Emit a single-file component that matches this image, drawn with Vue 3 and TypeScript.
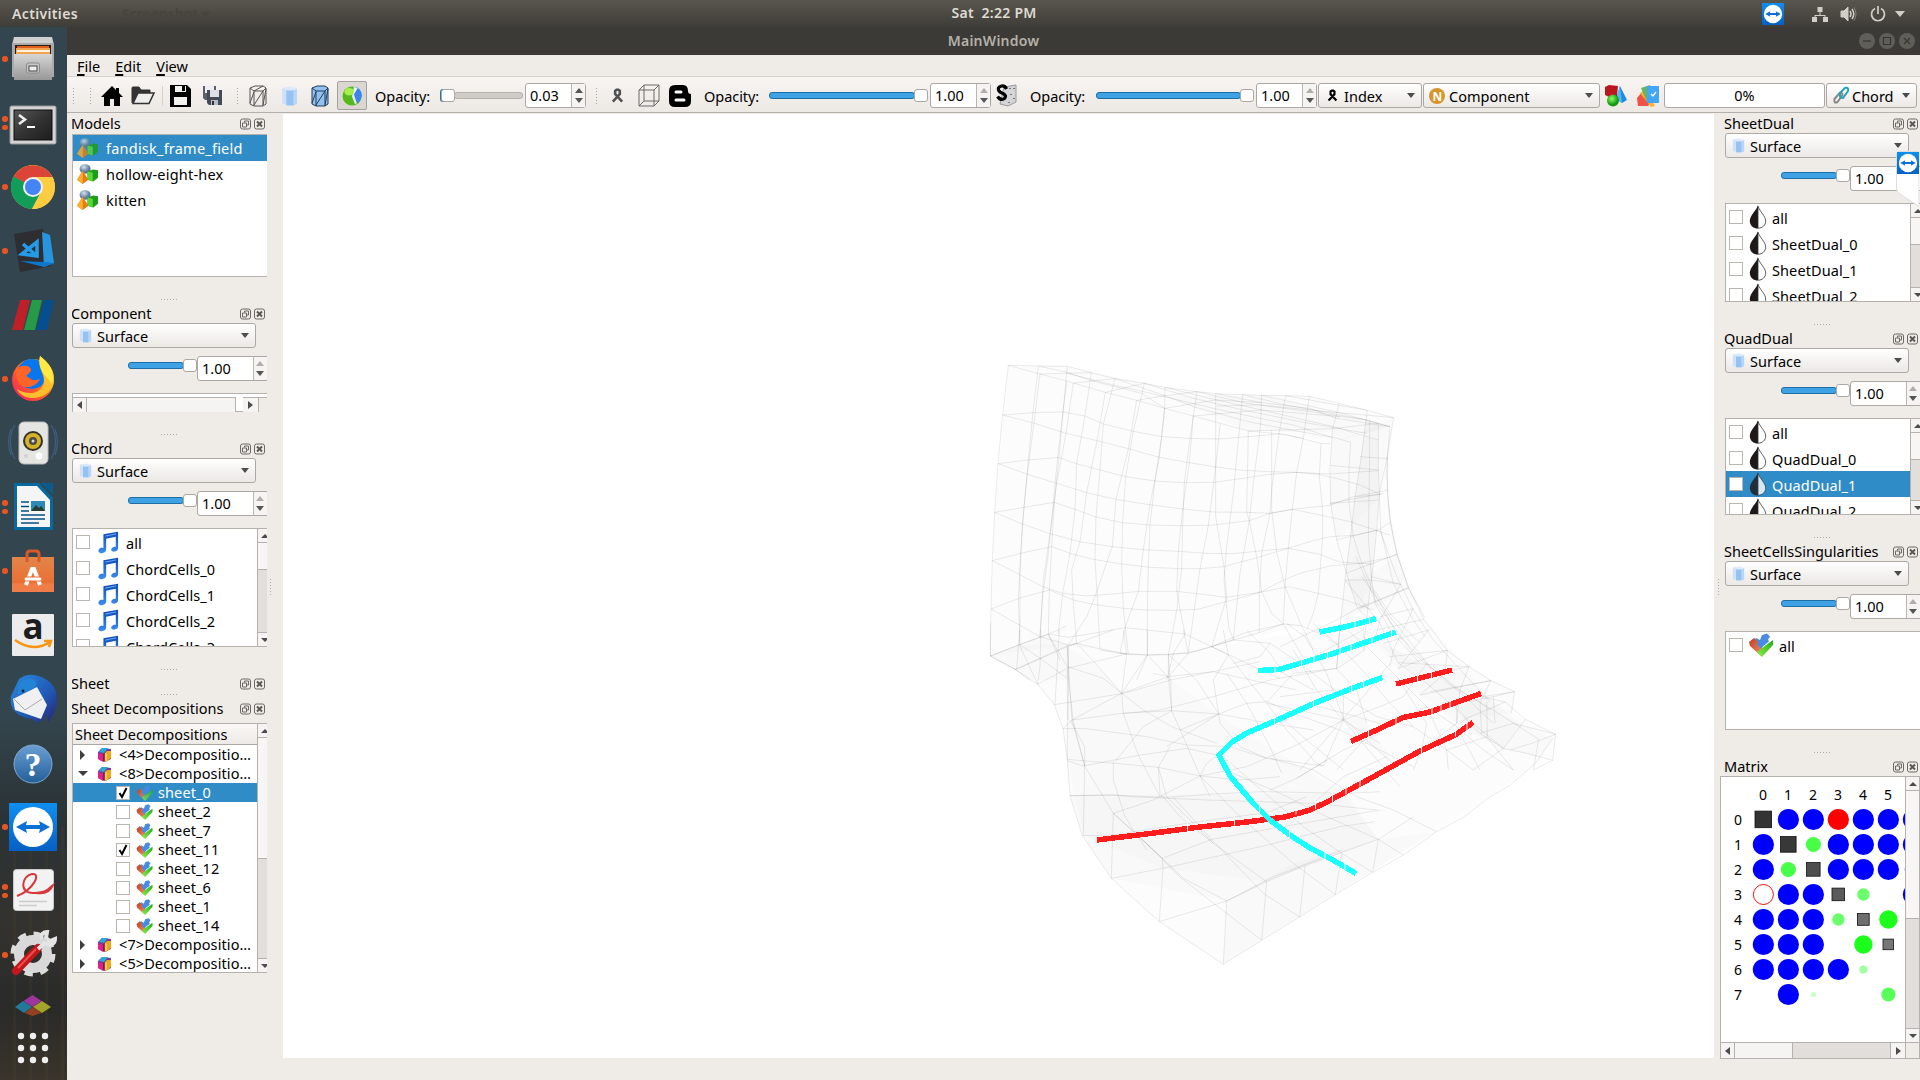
<script setup lang="ts">
interface Dock {
  title: string
  height: number
  listHeight: number
  icon?: string
  items?: string[]
  selected?: number
  scroll?: boolean
}

const leftDocks: Dock[] = [
  { title: 'Component', height: 135, listHeight: 0 },
  { title: 'Chord', height: 235, listHeight: 119, icon: 'note', items: ['all', 'ChordCells_0', 'ChordCells_1', 'ChordCells_2', 'ChordCells_3'], scroll: true },
]
const rightDocks: Dock[] = [
  { title: 'SheetDual', height: 209, listHeight: 99, icon: 'drop', items: ['all', 'SheetDual_0', 'SheetDual_1', 'SheetDual_2'], scroll: true },
  { title: 'QuadDual', height: 213, listHeight: 97, icon: 'drop', items: ['all', 'QuadDual_0', 'QuadDual_1', 'QuadDual_2'], selected: 2, scroll: true },
  { title: 'SheetCellsSingularities', height: 215, listHeight: 99, icon: 'sheet', items: ['all'] },
]
const models: string[] = ['fandisk_frame_field', 'hollow-eight-hex', 'kitten']

interface TreeRow { label: string; kind: 'closed' | 'open' | 'leaf'; checked?: boolean; selected?: boolean }
const tree: TreeRow[] = [
  { label: '<4>Decompositio…', kind: 'closed' },
  { label: '<8>Decompositio…', kind: 'open' },
  { label: 'sheet_0', kind: 'leaf', checked: true, selected: true },
  { label: 'sheet_2', kind: 'leaf' },
  { label: 'sheet_7', kind: 'leaf' },
  { label: 'sheet_11', kind: 'leaf', checked: true },
  { label: 'sheet_12', kind: 'leaf' },
  { label: 'sheet_6', kind: 'leaf' },
  { label: 'sheet_1', kind: 'leaf' },
  { label: 'sheet_14', kind: 'leaf' },
  { label: '<7>Decompositio…', kind: 'closed' },
  { label: '<5>Decompositio…', kind: 'closed' },
]

const launchers: { id: string; dots: number; glyph?: string }[] = [
  { id: 'files', dots: 1 }, { id: 'terminal', dots: 2 }, { id: 'chrome', dots: 1 }, { id: 'vscode', dots: 1 },
  { id: 'paraview', dots: 0 }, { id: 'firefox', dots: 1 }, { id: 'speaker', dots: 0 }, { id: 'writer', dots: 2 },
  { id: 'software', dots: 1 }, { id: 'amazon', dots: 0, glyph: 'a' }, { id: 'thunderbird', dots: 0 }, { id: 'help', dots: 0, glyph: '?' },
  { id: 'teamviewer', dots: 1 }, { id: 'pdf', dots: 2 }, { id: 'tweaks', dots: 1 },
]

interface Mark { x: number; y: number; shape: 'dot' | 'ring' | 'box'; size: number; color: string }
const blueCells = ['.BB.BBB', 'B..BBBB', 'B..BBB.', '.BB...B', 'BBB....', 'BBB....', 'BBBB...', '.B.....']
const marks: Mark[] = []
blueCells.forEach((row, y) => [...row].forEach((c, x) => {
  if (c === 'B') marks.push({ x, y, shape: 'dot', size: 10.6, color: '#0000ff' })
}))
marks.push(
  { x: 6, y: 2, shape: 'dot', size: 8.6, color: '#0000ff' },
  { x: 3, y: 0, shape: 'dot', size: 10.6, color: '#ff0000' },
  { x: 0, y: 3, shape: 'ring', size: 10, color: '#f01010' },
  { x: 2, y: 1, shape: 'dot', size: 7.6, color: '#48ff48' },
  { x: 1, y: 2, shape: 'dot', size: 7.6, color: '#48ff48' },
  { x: 4, y: 3, shape: 'dot', size: 6.2, color: '#6cff6c' },
  { x: 3, y: 4, shape: 'dot', size: 6.2, color: '#6cff6c' },
  { x: 5, y: 4, shape: 'dot', size: 9.2, color: '#1cff1c' },
  { x: 4, y: 5, shape: 'dot', size: 9.2, color: '#1cff1c' },
  { x: 4, y: 6, shape: 'dot', size: 4.1, color: '#a0ffa0' },
  { x: 2, y: 7, shape: 'dot', size: 2.6, color: '#c8ffc8' },
  { x: 5, y: 7, shape: 'dot', size: 7.1, color: '#58ff58' },
  { x: 0, y: 0, shape: 'box', size: 8.3, color: '#333333' },
  { x: 1, y: 1, shape: 'box', size: 7.8, color: '#383838' },
  { x: 2, y: 2, shape: 'box', size: 6.8, color: '#4e4e4e' },
  { x: 3, y: 3, shape: 'box', size: 6.3, color: '#5a5a5a' },
  { x: 4, y: 4, shape: 'box', size: 5.9, color: '#6e6e6e' },
  { x: 5, y: 5, shape: 'box', size: 5.3, color: '#777777' },
)

// Hexahedral mesh edges, grouped by patch; every patch is stored at 3x scale.
const wallEdges: string[] = [
  '145 46 235 48 322 49 394 68 465 86 553 100 615 112 711 125 767 131 848 134 905 136 977 137 1048 139 1138 160 1222 181 1301 203 1290 265 1282 318 1280 370 1283 421 1285 470 1291 517 1300 565 1311 613 1345 713 1395 803',
  '145 46 128 195 114 341 104 487 97 632 93 777 91 918 166 958 209 990',
  '145 46 240 72 340 99 436 127 530 151 614 175 700 198 781 220 865 243 975 253 1083 280 1110 281',
  '128 195 220 219 318 250 411 272 505 296 598 322 688 338 767 351 840 360 925 365 1010 367 1075 373 1140 388 1200 405 1255 430',
  '114 341 200 372 290 400 380 428 468 448 560 463 668 477 760 486 860 487 930 490 997 478 1085 496 1170 515 1290 555',
  '104 487 187 522 270 551 360 575 457 590 550 599 655 604 740 610 820 611 900 603 985 595 1075 612 1140 636 1235 642',
  '97 632 180 674 248 710 308 730 380 738 480 730 535 724 650 724 720 732 800 742 900 727 985 710 1075 730 1150 748 1240 780',
  '93 777 180 826 240 860 325 885 350 880 420 897 505 913 562 915 625 914 700 905 755 890 820 870 900 847 970 822 1025 827 1100 860 1150 900',
  '128 195 220 188 309 186 375 198 430 222 520 244 605 260 690 265 775 267 865 260 957 252 1030 265',
  '114 341 205 330 297 322 345 340 420 360 497 380 585 393 673 398 760 397 850 385 920 374 1010 367 1110 372 1255 362',
  '104 487 192 472 283 457 350 480 405 500 485 518 570 525 660 527 750 526 868 512 930 490 997 478 1110 466 1180 440 1283 421',
  '97 632 190 608 275 590 330 610 400 628 485 642 570 652 660 656 720 656 792 650 880 626 950 605 1060 572 1110 560 1180 556 1255 540 1291 517',
  '93 777 180 744 268 720 340 750 400 763 490 775 560 780 650 781 712 778 800 755 905 725 950 700 1020 670 1110 648 1200 640 1290 622 1311 613',
  '91 918 180 884 265 852 325 862 400 850 495 833 560 840 675 852 755 890 830 925 900 960 960 985',
  '166 958 240 925 325 885', '755 890 850 850 970 822', '180 884 240 925 322 985',
  '240 72 222 218 202 372 187 522 180 674 180 826 170 958',
  '235 50 218 195 205 330 192 472 182 610 175 745 180 884',
  '320 96 309 186 292 330 278 480 265 610 248 740 240 860',
  '322 49 309 186 297 322 283 457 275 590 268 720 265 852 300 930',
  '340 99 318 250 290 400 270 551 250 690 240 860',
  '394 68 375 198 350 340 345 480 330 610 308 730 295 850',
  '436 127 411 272 380 428 360 575 335 660 340 760 350 880',
  '465 86 430 222 420 360 408 500 405 628 413 760 420 897',
  '530 151 505 296 468 448 457 590 405 740 380 800 325 885',
  '553 100 520 244 497 380 488 518 485 642 490 775 505 913',
  '614 175 598 322 570 463 550 599 535 724 495 833 480 910',
  '615 112 614 175 605 260 585 393 570 525 565 650 562 780 562 915 530 990',
  '700 198 688 338 668 477 655 604 650 724 675 852 640 910 620 990',
  '711 125 700 198 690 265 673 398 668 527 665 656 650 781 625 914 630 990',
  '781 220 767 351 745 526 720 656 700 800 685 905',
  '767 131 767 351 767 500 792 650 800 742 755 890',
  '848 134 838 240 820 430 800 590 792 690 806 830 820 870',
  '865 243 860 487 868 512 890 620 905 725 935 790 970 822',
  '900 240 880 400 868 512 840 670 820 870',
  '905 136 902 220 900 240', '935 241 935 480 950 605 975 710 1025 827 1060 900',
  '977 137 957 252 935 420 930 490 905 610 898 725 898 847',
  '1048 139 1030 265 1010 367 997 478 985 595 975 710 970 822 1040 940',
  '1083 280 1078 380 1088 480 1088 560 1075 730 1060 790 1040 840',
  '1138 160 1118 235 1110 360 1112 460 1130 570 1160 670 1190 770 1240 830',
  '1172 277 1167 350 1167 460 1180 560 1205 640 1235 710 1290 790 1380 880',
  '1222 181 1218 210 1204 320 1185 440 1172 560 1157 670 1148 760 1140 830 1130 955',
  '1255 220 1255 270 1255 360 1258 430 1250 540 1240 640 1225 760 1210 900',
  '1229 210 1229 320 1227 450 1225 560 1235 690 1245 760 1290 840 1380 940',
  '1290 230 1282 318 1258 430 1262 540 1300 700 1360 810 1395 860',
  '240 72 394 68', '340 99 465 86', '436 127 553 100', '530 151 615 137 711 125', '614 175 767 150 905 158', '700 198 905 180 1140 200',
  '322 70 460 105 530 120 612 140 760 175 900 205 1000 225 1115 262',
  '235 48 325 68 394 92 545 130 614 175', '465 86 615 137 700 170 865 215 1020 245 1120 262 1172 277',
  '553 100 700 145 850 180 1020 215 1220 250', '615 112 770 150 905 180 1120 230 1255 270', '711 125 860 160 1048 185 1218 210 1290 230',
  '767 131 905 158 1048 175 1130 205 1290 230', '848 134 977 165 1222 210', '905 136 1138 188 1290 230', '977 137 1222 181', '770 168 900 165 1050 180 1301 203',
  '865 243 935 241 1118 236 1255 220', '1110 346 1255 360', '1110 460 1255 450', '1112 460 1270 430', '1130 570 1255 540', '1157 670 1311 613',
  '1155 690 1235 690 1322 703', '1195 775 1345 713', '1200 320 1282 326', '1190 440 1265 433',
]
const stepEdges: string[] = [
  '322 200 322 300 332 396 351 492 386 594 432 688 502 781 567 830 632 872 704 905 694 970',
  '704 905 640 920 560 935', '610 922 676 936 736 988 827 1033 818 1111 760 1140', '736 988 670 1075', '827 1033 755 1060 690 1080', '776 1048 760 1140',
  '827 1033 700 1000 600 1030', '818 1111 740 1090 670 1075', '676 936 560 985 540 1000',
  '195 570 300 700 354 818 440 880 560 985 670 1075', '228 500 290 640 400 790 502 880 640 960 776 1048',
  '245 560 330 680 450 830 540 900 632 960', '272 590 350 730 440 820 560 925 640 1000',
  '300 420 350 560 400 660 460 750 560 860 630 935', '275 560 362 583', '240 655 386 594', '300 680 400 656', '290 720 432 688', '310 760 446 720',
  '330 800 502 781', '354 818 567 830', '354 836 502 781', '380 870 567 830', '420 915 632 872', '450 905 632 872', '480 940 704 905',
  '502 781 495 850 420 915', '446 720 354 836', '400 656 340 780 330 830', '362 583 300 690 287 740', '567 830 540 900 530 1000', '632 872 600 940 605 1030',
  '530 935 530 1000', '550 980 600 1030 670 1075', '620 935 622 1040', '640 920 645 1000',
  '180 700 260 770 350 860 440 950 530 1010 610 1080 700 1140', '100 700 170 760 256 850 330 940 400 1010 500 1080 580 1140',
  '20 700 75 740 140 850 190 985 270 1060 350 1130', '0 770 75 735 170 690 260 640', '0 850 100 800 250 720',
  '0 920 160 900 290 980 400 1010', '0 1000 100 945 230 980 330 1010', '60 1140 190 985 250 920 330 820', '170 1140 260 1040 360 990 440 950',
  '250 710 255 780 170 837', '180 700 175 760 170 837', '170 837 230 900 260 1000', '350 860 440 1000 425 1080 400 1140', '440 950 500 1080 505 1140',
  '530 1010 600 1140', '620 1040 700 1140', '440 1070 530 1000', '500 1080 620 1040', '580 1140 670 1075', '0 980 80 1050 190 1140',
]
const floorEdges: string[] = [
  '31 -20 31 78 106 119 173 163 223 224 249 296 262 388 270 497 307 617 394 745 538 875 730 1003 845 931 959 861 1066 794 1178 727 1270 675 1370 605 1448 563 1528 502 1588 467 1666 401 1718 325',
  '262 50 262 388', '266 50 264 270', '31 78 118 44 204 13 260 -12', '106 119 262 50 290 40 400 0', '173 163 262 115 440 72', '223 224 430 190 572 150 700 125 840 95',
  '249 296 276 270 428 250 575 242 716 252 870 280 1000 300', '249 296 310 295 500 320 620 345 750 350 860 385 1030 408',
  '262 388 405 400 535 412 660 438 780 450 900 440', '262 392 310 408 475 376 620 355 710 375',
  '270 497 400 495 560 502 700 492 850 485 1100 490 1200 485', '270 497 400 495 450 500 680 510 1000 520 1190 540',
  '307 617 400 615 620 580 860 548 980 500', '394 745 548 715 850 648 1080 590 1185 575', '538 875 740 813 860 755 970 708 1195 628 1300 560',
  '547 685 695 628 850 600 1200 540', '547 685 549 715 538 875', '740 813 730 1003', '860 755 845 931', '975 708 959 861', '1085 670 1066 794', '1195 628 1178 727',
  '740 813 610 745 547 685 400 550 314 408 280 275 262 120', '860 755 700 640 560 500 535 412 570 350', '740 813 880 740 1085 660',
  '845 931 740 850 605 745 478 620 400 550', '959 861 850 790 695 628 580 502', '1066 794 940 700 780 560 660 438 680 400 720 370',
  '1178 727 1085 670 970 590 850 485 730 380', '1270 675 1195 628 1040 560 900 490 760 430', '1370 605 1240 540 1130 500 1000 420 870 385',
  '478 620 547 685', '400 550 394 745', '314 408 310 617', '400 550 520 510 660 438 800 410 950 345 1090 270',
  '270 270 314 350 314 408', '238 0 225 224', '120 0 118 44 173 163', '183 0 180 110 173 163', '290 40 262 50 276 270 314 408',
  '290 40 360 115 425 190 490 240 575 290 710 340', '204 13 262 110 370 145 425 190', '362 60 420 70 440 72 425 190 430 250 475 376 540 500',
  '502 75 425 190 276 270', '502 75 572 150 575 242 620 345 660 438 690 500', '565 75 565 140 575 242 490 290 405 395', '625 70 565 140 425 190',
  '565 75 650 150 716 252 720 280 780 350 860 385', '695 50 745 75 860 220 1090 270 1200 340', '695 50 625 70 502 75 420 70', '745 75 700 150 716 252 640 300 560 350',
  '760 30 695 50', '760 30 870 40 960 100 1090 200', '800 220 862 215 940 130 1070 115', '740 130 800 220 870 350 905 430', '800 220 716 252 600 300',
  '860 220 920 300 1010 400 1030 408', '1090 200 1090 270 1030 408', '862 215 940 250 1080 300 1300 410', '940 60 1010 180 1090 270 1140 330 1260 470',
  '1090 270 1200 230 1270 200 1340 100', '950 445 1090 360 1200 310', '870 480 950 445 1040 390', '1000 520 1090 440 1220 380',
  '800 0 870 70 910 130 1000 180', '870 40 840 80 760 100', '520 130 565 140 700 125 860 160 950 180', '400 395 400 450 435 560 500 660',
  '535 412 540 490 600 560 700 640', '430 250 540 240 700 200 870 150 1070 115', '730 0 745 75', '610 0 625 70', '430 0 440 72', '502 0 502 75',
]
// Region fills are kept separately so overlapping patches accumulate.
const wallFills: string[] = [
  '145 46 322 49 615 112 767 131 1048 139 1301 203 1290 230 1110 281 935 241 865 243 700 198',
  '145 46 700 198 865 243 1110 281 1301 203 1283 421 1311 613 1345 713 1240 780 755 890 562 915 325 885 91 918 104 487',
  '1118 236 1255 270 1255 450 1130 570 1110 460', '1218 210 1290 230 1258 430 1240 690 1195 775 1157 670 1185 440',
  '1218 210 1255 215 1258 430 1240 640 1225 770 1140 830 1157 670 1185 440',
  '91 918 265 852 325 885 325 990 209 990', '615 137 905 136 1290 230 1222 250 865 243',
]
const floorFills: string[] = [
  '31 78 106 119 173 163 223 224 249 296 270 497 307 617 394 745 538 875 730 1003 1528 502 1666 401 1718 325 1490 220 1190 20 1000 0 695 50 502 75 290 40 118 44',
  '262 50 360 115 425 190 572 150 740 270 1090 490 1195 628 860 755 547 715 310 617 262 388',
  '270 497 1100 490 1195 628 860 755 740 813 394 745 307 617', '940 700 1195 628 1370 605 1066 794 730 1003 740 813',
]
const stepFills: string[] = [
  '195 570 290 540 351 492 432 688 567 830 704 905 694 970 560 985 440 880 280 750 240 655',
  '530 935 620 922 736 988 827 1033 818 1111 670 1075 550 1020', '280 750 440 820 567 850 640 935 720 1000 670 1078 530 1000 420 915',
  '180 700 250 710 255 780 170 837', '190 985 250 985 350 1130 270 1060',
]
const cyanTracks: string[] = ['1319.5 632 1340 628 1357 624 1376 618.5', '1258 670.5 1279 669.5 1300 663.5 1333 653.5 1365 642.5 1396 632',
  '1382.5 677.5 1353 688 1315 703 1275 721 1247 733 1232 742 1219 755 1230 776 1253 803 1270 820 1290 835 1310 848 1332 859.5 1356 873.5']
const redTracks: string[] = ['1396 684 1416 679 1432 675 1452 670', '1351 741.5 1379 729 1403 717.5 1430 712 1449 705 1481 693.5',
  '1097 840 1150 833.5 1200 827 1247 822 1285 817 1310 810 1327 802 1362 783 1420 751 1455 735 1473 722.5']
const gaps: [number, number][] = [
  [1355, 624], [1369.5, 620], [1275, 669.5], [1301.5, 663], [1314, 659.5], [1327.5, 655.5], [1340, 651], [1351, 648], [1372, 640.5], [1391.5, 634],
  [1363.5, 685], [1351.5, 689], [1313.5, 704.5], [1274.5, 721], [1259.5, 810.5], [1289.5, 834], [1325, 857], [1345, 868],
  [1417.5, 678.5], [1431.5, 674.5], [1368.5, 734], [1396, 720], [1432, 711], [1441, 708], [1450, 705],
  [1187.5, 826.5], [1234.5, 820.5], [1296, 809.5], [1315.5, 804], [1332.5, 797], [1346, 789.5], [1360, 781.5], [1421.5, 748], [1455.5, 731.5], [1467, 726],
]
</script>

<template>
  <div class="desktop">
    <svg class="defs" width="0" height="0" aria-hidden="true">
      <defs>
        <linearGradient id="gMetal" x2="0" y2="1"><stop offset="0" stop-color="#d6d6d6" /><stop offset="1" stop-color="#979797" /></linearGradient>
        <linearGradient id="gTerm" x2="1" y2="1"><stop offset="0" stop-color="#565656" /><stop offset=".5" stop-color="#333" /><stop offset="1" stop-color="#1d1d1d" /></linearGradient>
        <linearGradient id="gTv" x2="0" y2="1"><stop offset="0" stop-color="#0f8ff0" /><stop offset="1" stop-color="#0660c4" /></linearGradient>
        <linearGradient id="gFox" x2="1" y2="0" y1="1"><stop offset="0" stop-color="#f5156c" /><stop offset=".5" stop-color="#ff6a1f" /><stop offset="1" stop-color="#ffe43a" /></linearGradient>
        <linearGradient id="gNote" x2="0" y2="1"><stop offset="0" stop-color="#0b49b8" /><stop offset="1" stop-color="#3c8ff0" /></linearGradient>
        <linearGradient id="gHelp" x2="0" y2="1"><stop offset="0" stop-color="#6b9fd6" /><stop offset="1" stop-color="#235f97" /></linearGradient>
        <linearGradient id="gBird" x2="1" y2="1"><stop offset="0" stop-color="#2b8ae0" /><stop offset=".6" stop-color="#1f58b5" /><stop offset="1" stop-color="#2a2171" /></linearGradient>
        <linearGradient id="gSoft" x2="0" y2="1"><stop offset="0" stop-color="#e2854a" /><stop offset=".75" stop-color="#ea6f33" /><stop offset=".76" stop-color="#f07c48" /></linearGradient>
        <linearGradient id="gRed" x2="1" y2="1"><stop offset="0" stop-color="#c23a1c" /><stop offset="1" stop-color="#f09a6a" /></linearGradient>
        <linearGradient id="gGreen" x2="1" y1="1"><stop offset="0" stop-color="#8df04c" /><stop offset="1" stop-color="#1fae12" /></linearGradient>
        <radialGradient id="gBall" cx=".4" cy=".35"><stop offset="0" stop-color="#8cff60" /><stop offset="1" stop-color="#159a14" /></radialGradient>
        <radialGradient id="gGrey" cx=".4" cy=".3"><stop offset="0" stop-color="#d5e2ee" /><stop offset="1" stop-color="#5b7b99" /></radialGradient>
      </defs>
      <symbol id="cyl" viewBox="0 0 16 18"><path d="M1 2 8 1v16l-7-1z" fill="#cfe1f8" /><path d="M5 3.500h7v14H5z" fill="#94c2f2" /><path d="M12 4 15 2v14l-3 1.500z" fill="#b7d5f8" /><path d="M1 2 8 .5 15 2l-4 2H6z" fill="#dce9fa" /></symbol>
      <symbol id="shapes" viewBox="0 0 22 24"><circle cx="8.500" cy="6" r="5.800" fill="url(#gGrey)" /><path d="M6 8 12 19 6 24 0 19z" fill="#f07a12" /><path d="M6 8v16l-6-5z" fill="#f9b02e" /><path d="m11 9 6-2.500 5 1v9L17 21l-6-2z" fill="#1f9c1a" /><path d="m11 9 5.500 1.500V21L11 19z" fill="#5bd838" /></symbol>
      <symbol id="drop" viewBox="0 0 18 24"><path d="M9 .3C7.800 5 .8 10.500 .8 16c0 4.500 3.800 7.600 8.200 7.600z" fill="#1e1819" /><path d="M9 1.200c1.500 5 7.700 10 7.700 14.800 0 4.300-3.400 7.200-7.700 7.200z" fill="#fff" stroke="#333" stroke-width=".8" /></symbol>
      <symbol id="note" viewBox="0 0 24 24"><path d="M7 3 23 .3v17.700c.3 2-2 4-4.500 4s-4-2-2.300-3.700 3.300-2 4.300-1.600V5.800L10 8V20c0 2-2.500 3.700-5 3.700S.5 21.500 2 19.500s3.500-2 5-1.500z" fill="url(#gNote)" /><path d="M9 5 21 2.600" stroke="#7bb4f8" stroke-width="1" /></symbol>
      <symbol id="sheet" viewBox="0 0 24 24"><path d="m0 9 5-4 7 5 2 8-2 5L1 13z" fill="url(#gRed)" /><path d="m12 16 5-4 7-5v5L13 24l-5-5z" fill="url(#gGreen)" /><path d="m7 5 4 2 2-5 5-1.500 3 3-2 3 1 2-5 4-3 3-4-4 1-3-3-2z" fill="#4a8ae0" /></symbol>
      <symbol id="box3" viewBox="0 0 14 15"><path d="M4 1 13 2v10l-6 3-7-3V5z" fill="#7c3a93" /><path d="m0 6 5 2v7l-5-3z" fill="#e0218a" /><path d="m5 8 1-2v8l-1 1z" fill="#8c1456" /><path d="m7 6 2-2 4 0v7l-5 4-1-1z" fill="#eda81d" /><path d="m7 6 2 1v8l-2-1z" fill="#f6cf31" /><path d="m4 1 6 0-4 5-5-1z" fill="#28a9d8" /></symbol>
      <symbol id="tv" viewBox="0 0 48 48"><path d="M0 0h48v48H0z" fill="url(#gTv)" /><circle cx="24" cy="24" r="20" fill="#fff" /><path d="m7 24 11-6-1 4h14l-1-4 11 6-11 6 1-4H17l1 4z" fill="#0b6fd4" /></symbol>
      <symbol id="float" viewBox="0 0 11 11"><rect x=".5" y=".5" width="10" height="10" rx="2" fill="none" stroke="#6c6a67" /><path d="M4.500 4V2.500h4v4H7M2.500 4.500h4v4h-4z" fill="none" stroke="#6c6a67" /></symbol>
      <symbol id="close" viewBox="0 0 11 11"><rect x=".5" y=".5" width="10" height="10" rx="2" fill="none" stroke="#6c6a67" /><path d="m3 3 5 5M8 3 3 8" stroke="#5a5856" stroke-width="2" /></symbol>
      <symbol id="ribbon" viewBox="0 0 14 16"><path d="M2 14.500 9.500 6.500V3L8 1.800H6L4.500 3v3.500L12 14.500" fill="none" stroke="currentColor" stroke-width="2.800" /></symbol>

      <symbol id="files" viewBox="0 0 64 64"><path d="M13 10h38l2 8H11z" fill="#d0d0d0" /><path d="M11 16h42v34H11z" fill="#aaa" /><path d="M14 18h36v10H14z" fill="#2b2018" /><path d="M16 19h32v9H16z" fill="#e0601c" /><path d="M15 21h34v7H15z" fill="#f3a24e" /><path d="M16 23h33v2H16z" fill="#fff2e0" /><path d="M13 27h38v26H13z" fill="url(#gMetal)" /><rect x="25.500" y="36" width="13" height="10" rx="2" fill="#c9c9c9" stroke="#888" /><rect x="28" y="39" width="8" height="5" fill="#eee" stroke="#444" /></symbol>
      <symbol id="terminal" viewBox="0 0 64 64"><rect x="9" y="15" width="46" height="38" rx="1.500" fill="#d4d4d4" stroke="#989898" /><rect x="13" y="19" width="38" height="30" fill="url(#gTerm)" stroke="#0e0e0e" /><path d="m18 24 6 4.500-6 4.500" fill="none" stroke="#eee" stroke-width="2.600" /><path d="M26 36h8" stroke="#fff" stroke-width="2" /></symbol>
      <symbol id="chrome" viewBox="0 0 64 64"><circle cx="32" cy="32" r="22" fill="#fbcb3c" /><path d="M32 32 12.500 22A22 22 0 0 1 51.500 22z" fill="#db4437" /><path d="M12.500 21.500A22 22 0 0 0 31 54l9-17-8-5z" fill="#119d58" /><path d="M32 22h19.500A22 22 0 0 1 31 54l9-17z" fill="#fdcc40" /><circle cx="32" cy="32" r="10" fill="#f1f1f1" /><circle cx="32" cy="32" r="8" fill="#4484f4" /></symbol>
      <symbol id="vscode" viewBox="0 0 64 64"><path d="m13 15 29-5 8 37-31 6z" fill="#2e2d31" /><path d="m41 13 8 3 4 28-10 4z" fill="#2795de" /><path d="M19 42 43 48l10-4-9-1z" fill="#0d77ca" /><path d="m22 25 14 12M21 35l15-12v14z" fill="none" stroke="#239be9" stroke-width="3.600" /></symbol>
      <symbol id="paraview" viewBox="0 0 64 64"><path d="M19 17h10l-7 30H11z" fill="#bd2029" /><path d="M31 17h10l-7 30H23z" fill="#259b47" /><path d="M43 17h10l-7 30H35z" fill="#054f8f" /></symbol>
      <symbol id="firefox" viewBox="0 0 64 64"><circle cx="32" cy="33" r="21" fill="url(#gFox)" /><circle cx="31" cy="27" r="15" fill="#0877ee" /><path d="M14 24c5-8 17-6 16 0l-5 5c4 2 7 6 14 3-4 9-18 11-22 3z" fill="#ff6428" /><path d="M39 9c9 7 15 14 14 26-4 19-31 21-37 7 12 8 27 4 27-9 0-7-7-13-4-24z" fill="#ffbe2b" /><path d="M39 9c9 7 16 16 12 28-4-7-15-12-12-28z" fill="#ffe943" /></symbol>
      <symbol id="speaker" viewBox="0 0 64 64"><path d="M14 14c-6 9-6 24 0 34M50 14c6 9 6 24 0 34M10 18c-3 8-3 18 0 26M54 18c3 8 3 18 0 26" fill="none" stroke="#3f5f80" stroke-width="1.200" /><rect x="18" y="11" width="29" height="42" rx="5" fill="#e5e5e2" stroke="#bbb" /><circle cx="32" cy="30" r="10" fill="#35322a" /><circle cx="32" cy="30" r="8" fill="#d5b227" /><circle cx="32" cy="30" r="4" fill="#4a4a48" /><circle cx="32" cy="30" r="1.500" fill="#ddd" /><circle cx="38" cy="45" r="3.500" fill="#fff" /><circle cx="25" cy="45" r="2" fill="#d2d2d2" /></symbol>
      <symbol id="writer" viewBox="0 0 64 64"><path d="M13 8h25l14 15v32H13z" fill="#0868a0" /><path d="M40 8h12v12z" fill="#0b5c8d" /><path d="M16 11h20l13 14v27H16z" fill="#f5f5f5" /><path d="M20 27h8M20 31.500h8M20 36h8M20 40h24M20 44h24M20 48h18" stroke="#055083" stroke-width="1.700" /><path d="M30 26h14v10H30z" fill="#2d89b5" /><path d="m30 36 5-6 3 3 2-2 4 5z" fill="#243f31" /></symbol>
      <symbol id="software" viewBox="0 0 64 64"><path d="M11 18h42v35H11z" fill="url(#gSoft)" /><path d="M26 23V15q0-3 3-3h6q3 0 3 3v8" fill="none" stroke="#d75929" stroke-width="3" /><path d="m25 46 6-16h2l6 16" fill="none" stroke="#fff" stroke-width="4" /><rect x="23" y="38" width="18" height="4" rx="2" fill="#fff" stroke="#ec702f" /></symbol>
      <symbol id="amazon" viewBox="0 0 64 64"><rect x="11" y="11" width="42" height="42" rx="1" fill="#ececec" /><path d="M14 37q18 13 35 2m-6-1h7l-2 6" fill="none" stroke="#f79411" stroke-width="2.500" /></symbol>
      <symbol id="thunderbird" viewBox="0 0 64 64"><path d="M18 12C28 3 46 9 53 20c6 12 2 26-6 35l-1-7-8 8-7-4C14 50 8 40 10 29z" fill="url(#gBird)" /><path d="M12 32 36 20l10 18-6 14-26-9z" fill="#f0f0f2" /><path d="m12 31 12 12 17-11" fill="none" stroke="#aaa" /><path d="M17 27c-1-10 5-18 15-15 6 2 4 8-2 11z" fill="#2384d6" /><circle cx="22" cy="24" r="1.400" fill="#171f35" /></symbol>
      <symbol id="help" viewBox="0 0 64 64"><circle cx="32" cy="33" r="19" fill="url(#gHelp)" stroke="#7ea9d0" /></symbol>
      <symbol id="teamviewer" viewBox="0 0 64 64"><use href="#tv" x="8" y="8" width="48" height="48" /></symbol>
      <symbol id="pdf" viewBox="0 0 64 64"><rect x="12.500" y="10.500" width="40" height="41" rx="3" fill="#f2f2f2" stroke="#c9c9c9" /><path d="M16 37C32 31 41 14 31 15s-14 20 2 19 14-5 19-8c-3 8-10 9-17 8" fill="none" stroke="#d8383c" stroke-width="2" /><path d="M18 42.500h28M18 46.500h18" stroke="#ccc" stroke-width="1.300" /></symbol>
      <symbol id="tweaks" viewBox="0 0 64 64"><circle cx="32" cy="31" r="14" fill="none" stroke="#d9d9d9" stroke-width="10" /><circle cx="32" cy="31" r="20" fill="none" stroke="#dcdcdc" stroke-width="5" stroke-dasharray="8.200 7.500" /><path d="m15 48 22-23" stroke="#c4161b" stroke-width="8" stroke-linecap="round" /><path d="m17 45 18-19" stroke="#ed4e4a" stroke-width="2" /><path d="m37 26 8-7m-4-3c-2-5 2-7 5-7l-1 6 4 3 5-2c0 5-5 7-9 4" fill="none" stroke="#e4e4e4" stroke-width="4" /></symbol>
    </svg>

    <header class="topbar">
      <span class="activities">Activities</span>
      <span class="ghost">Screenshot ▾</span>
      <span class="clock">Sat&nbsp; 2:22 PM</span>
      <div class="tray">
        <svg width="22" height="22"><use href="#tv" /></svg>
        <svg width="16" height="16" viewBox="0 0 16 16" fill="#d0cec9"><path d="M5.500 1h5v5h-5zM0 11h5v5H0zM11 11h5v5h-5zM7.500 6h1v3h5v2h-1v-1h-9v1h-1V9h5z" /></svg>
        <svg width="17" height="16" viewBox="0 0 17 16" fill="none" stroke="#d0cec9"><path d="M1 5h3l4-4v14l-4-4H1z" fill="#d0cec9" /><path d="M10 5q2 3 0 6M12 3q3.500 5 0 10" stroke-width="1.500" /><path d="M14 1.500q4 6.500 0 13" stroke="#86847e" /></svg>
        <svg width="16" height="16" viewBox="0 0 16 16" fill="none" stroke="#d0cec9" stroke-width="1.700"><path d="M5 2.500a6.500 6.500 0 1 0 6 0M8 0v8" /></svg>
        <svg width="10" height="6" viewBox="0 0 10 6"><path d="M0 0h10L5 6z" fill="#d0cec9" /></svg>
      </div>
    </header>

    <div class="work">
      <nav class="launcher">
        <div v-for="l in launchers" :key="l.id" class="launch">
          <span class="pips"><i v-for="n in l.dots" :key="n" /></span>
          <svg width="64" height="64"><use :href="'#' + l.id" /></svg>
          <b v-if="l.glyph" class="glyph" :class="l.id">{{ l.glyph }}</b>
        </div>
        <svg class="bottom-icons" width="66" height="93" viewBox="0 0 66 93">
          <path d="m32.500 8 9 6-9 6-9-6z" fill="#9c359c" /><path d="m23 14 9 6-8 6-9-6z" fill="#24799b" /><path d="m42 14 9 6-9 6-9-6z" fill="#a3a528" /><path d="m32.500 20 9 6-9 3-8-3z" fill="#914022" />
          <g fill="#efefef"><template v-for="r in 3" :key="r"><circle v-for="c in 3" :key="c" :cx="9 + c * 12" :cy="37 + r * 12" r="3.200" /></template></g>
        </svg>
      </nav>

      <main class="window">
        <div class="titlebar"><span>MainWindow</span>
          <div class="winbtns">
            <svg v-for="d in ['M4 8h8', 'M4.500 4.500h7v7h-7z', 'm5 5 6 6m0-6-6 6']" :key="d" width="16" height="16"><circle cx="8" cy="8" r="8" fill="#605e58" /><path :d="d" fill="none" stroke="#373530" stroke-width="1.200" /></svg>
          </div>
        </div>
        <div class="menubar"><span><u>F</u>ile</span><span><u>E</u>dit</span><span><u>V</u>iew</span></div>

        <div class="toolbar">
          <i class="grip g1" /><i class="grip g2" />
          <svg class="t-home" width="22" height="20" viewBox="0 0 22 20"><path d="M11 0 0 11h3v9h6v-7h4v7h6v-9h3l-4-4V2h-3v2z" /></svg>
          <svg class="t-open" width="24" height="19" viewBox="0 0 24 19"><path d="M1 17V2q0-1 1-1h6l2 3h9v3" fill="#333" stroke="#333" /><path d="M2 17.500 7 7h16l-5 10.500z" fill="#eee" stroke="#333" stroke-width="1.500" /></svg>
          <i class="bar" />
          <svg class="t-save" width="21" height="22" viewBox="0 0 21 22"><path d="M0 0h17l4 4v18H0z" /><path d="M5 1h11v6H5zM4 12h13v8H4z" fill="#f3f1ee" /><path d="M12 1h3v5h-3z" /></svg>
          <svg class="t-saveall" width="19" height="20" viewBox="0 0 19 20"><path d="M0 0h13v14H2L0 12z" fill="#5b6068" /><path d="M2 0h9v7H2z" fill="#eceef2" /><path d="M4 4h15v15H6l-2-2z" fill="#454b56" /><path d="M7 4h9v7H7z" fill="#dcdfe6" /><path d="M8 14h7v5H8z" fill="#b7bbc4" /><path d="M9 15h2v4H9z" fill="#333" /></svg>
          <i class="grip g3" />
          <svg class="t-wire" width="18" height="22" viewBox="0 0 18 22" fill="none" stroke="#555"><path d="M1 3 6 1h8l3 2-3 3H5zM1 3v16l4 2h9l3-2V3M5 6v15M14 6v15M5 20l9-14M1 18 5 7M14 20l3-16M5 6l9-5" /></svg>
          <svg class="t-cyl" width="17" height="20" viewBox="0 0 16 18" preserveAspectRatio="none"><use href="#cyl" /></svg>
          <svg class="t-cyl2" width="18" height="22" viewBox="0 0 18 22" fill="#92c0f0" stroke="#253d58"><path d="M1 3 6 1h8l3 2v16l-3 2H5l-4-2z" /><path d="M1 3 5 6h9l3-3M5 6v15M14 6v15M5 20l9-14M1 18 5 7M14 20l3-16" fill="none" /></svg>
          <span class="pressed"><svg width="21" height="20" viewBox="0 0 21 21"><circle cx="10" cy="10.500" r="10" fill="#55b91b" /><path d="M10 11 13 1q4 0 6.500 5t-3 12z" fill="#3c86ea" /><path d="m10 11 2-10 4 1-4 7 3 9-2 1z" fill="#e9f4ff" /><ellipse cx="7" cy="6" rx="5" ry="4" fill="#a7ef4a" /></svg></span>
          <span class="op o1">Opacity:</span>
          <span class="slider low s1"><i /></span>
          <span class="spin p1"><b>0.03</b><em class="on"><s /><s /></em></span>
          <i class="grip g4" />
          <svg class="t-rib" width="13" height="17"><use href="#ribbon" /></svg>
          <svg class="t-cube" width="22" height="23" viewBox="0 0 22 23" fill="none" stroke="#6a6a68"><path d="M1 6h15v16H1zM6 1h15v16H6zM1 6l5-5M16 6l5-5M1 22l5-5M16 22l5-5" /></svg>
          <svg class="t-b" width="22" height="22" viewBox="0 0 22 22"><path d="M6 0h8q5 0 5 6 0 3 3 3v7q0 6-6 6H6q-6 0-6-6V6q0-6 6-6z" /><path d="M7 7h5M7 15h8" stroke="#fff" stroke-width="3" stroke-linecap="round" /></svg>
          <span class="op o2">Opacity:</span>
          <span class="slider s2"><i /></span>
          <span class="spin p2"><b>1.00</b><em><s /><s /></em></span>
          <svg class="t-s" width="21" height="23" viewBox="0 0 21 23"><path d="M8 3 20 1v17l-8 4-8-2z" fill="#d5d5d8" stroke="#99999d" /><path d="M14 4v1m4-1v1m-3 5v1m3 3v1m-5 3v1" stroke="#777" stroke-width="2" /><path d="M10.500 5Q9 1.500 5.500 2 1 3 3 7q1 1.500 4 2.500 4 2 1.500 5-4 2.500-7-2" fill="none" stroke="#000" stroke-width="3.200" /></svg>
          <span class="op o3">Opacity:</span>
          <span class="slider s3"><i /></span>
          <span class="spin p3"><b>1.00</b><em><s /><s /></em></span>
          <span class="combo c1"><svg width="11" height="15"><use href="#ribbon" /></svg><b>Index</b><s /></span>
          <span class="combo c2"><svg width="16" height="16" viewBox="0 0 16 16"><circle cx="8" cy="8" r="8" fill="#d99528" /><text x="3.500" y="12.500" fill="#fff" font-size="12" font-weight="700">N</text></svg><b>Component</b><s /></span>
          <svg class="t-sh" width="22" height="22" viewBox="0 0 22 22"><path d="m0 2 4-2 9 1-1 10-8 1-4-2z" fill="#bb1720" /><path d="M15 1 22 15l-5 3-6-4z" fill="#1c8be2" /><path d="m15 1 2 17-6-4z" fill="#55b4f1" /><circle cx="8" cy="15.500" r="6" fill="url(#gBall)" /></svg>
          <svg class="t-cards" width="22" height="22" viewBox="0 0 22 22"><path d="m0 13 6-7 9 9-4 6H1z" fill="#f05048" /><path d="m3 8 6-3 9 16-4 1z" fill="#fbb02e" /><path d="m4 3 9-3 4 15-7 2z" fill="#69b461" /><path d="M10 1h12v17H10z" fill="#42a5f5" /><path d="m14 9 2 2 3-4" fill="none" stroke="#fff" stroke-width="1.300" /></svg>
          <span class="progress">0%</span>
          <span class="combo c3"><svg width="18" height="19" viewBox="0 0 18 19" fill="none" stroke-width="2"><path d="m2.500 13 5-6q3-1 3 2l-5 7q-4 2-3-3z" stroke="#888" /><path d="m8 7 5-5q4-1 3 3l-5 7q-3 0-3-2z" stroke="#28a0b8" /></svg><b>Chord</b><s /></span>
        </div>

        <div class="content">
          <aside class="left">
            <section class="dock models">
              <div class="head"><span>Models</span><svg width="11" height="12"><use href="#float" /></svg><svg width="11" height="12"><use href="#close" /></svg></div>
              <ul class="list">
                <li v-for="(m, i) in models" :key="m" :class="{ sel: i === 0 }"><svg width="21" height="20" viewBox="0 0 22 24" preserveAspectRatio="none"><use href="#shapes" /></svg><span>{{ m }}</span></li>
              </ul>
            </section>
            <section v-for="d in leftDocks" :key="d.title" class="dock" :style="{ height: d.height + 'px' }">
              <i class="split" />
              <div class="head"><span>{{ d.title }}</span><svg width="11" height="12"><use href="#float" /></svg><svg width="11" height="12"><use href="#close" /></svg></div>
              <span class="combo surface"><svg width="13" height="15"><use href="#cyl" /></svg><b>Surface</b><s /></span>
              <div class="row"><span class="slider"><i /></span><span class="spin"><b>1.00</b><em><s /><s /></em></span></div>
              <div v-if="!d.items" class="hbar"><i class="al" /><u /><i class="ar" /><small /></div>
              <div v-else class="listbox" :style="{ height: d.listHeight + 'px' }">
                <ul><li v-for="t in d.items" :key="t"><i class="check" /><svg class="ic-note" width="22" height="23"><use :href="'#' + d.icon" /></svg><span>{{ t }}</span></li></ul>
                <div class="vbar"><i class="up" /><u /><i class="down" /></div>
              </div>
            </section>
            <section class="dock sheet"><i class="split" /><div class="head"><span>Sheet</span><svg width="11" height="12"><use href="#float" /></svg><svg width="11" height="12"><use href="#close" /></svg></div></section>
            <section class="dock">
              <i class="split" />
              <div class="head"><span>Sheet Decompositions</span><svg width="11" height="12"><use href="#float" /></svg><svg width="11" height="12"><use href="#close" /></svg></div>
              <div class="treebox">
                <div class="tree">
                  <div class="th">Sheet Decompositions</div>
                  <div v-for="r in tree" :key="r.label" class="tr" :class="[r.kind, { sel: r.selected }]">
                    <template v-if="r.kind !== 'leaf'"><i class="arrow" /><svg class="ic-box" width="14" height="15"><use href="#box3" /></svg></template>
                    <template v-else><i class="check"><svg v-if="r.checked" width="12" height="12" viewBox="0 0 12 12"><path d="m2.500 6 2.500 4 4.500-9" fill="none" stroke="#000" stroke-width="2" /></svg></i><svg class="ic-sheet" width="17" height="16"><use href="#sheet" /></svg></template>
                    <span>{{ r.label }}</span>
                  </div>
                </div>
                <div class="vbar long"><i class="up" /><u /><i class="down" /></div>
              </div>
            </section>
          </aside>

          <i class="vsplit v1" />
          <section class="view">
            <svg width="1431" height="944" viewBox="283 114 1431 944">
              <g fill="#000" fill-opacity=".013">
                <g transform="translate(960 350) scale(.33333)"><polygon v-for="p in wallFills" :key="p" :points="p" /></g>
                <g transform="translate(980 630) scale(.33333)"><polygon v-for="p in floorFills" :key="p" :points="p" /></g>
                <g transform="translate(1280 390) scale(.33333)"><polygon v-for="p in stepFills" :key="p" :points="p" /></g>
              </g>
              <g fill="none" stroke="#000" stroke-opacity=".085" stroke-width="3">
                <g transform="translate(960 350) scale(.33333)"><polyline v-for="p in wallEdges" :key="p" :points="p" /></g>
                <g transform="translate(980 630) scale(.33333)"><polyline v-for="p in floorEdges" :key="p" :points="p" /></g>
                <g transform="translate(1280 390) scale(.33333)"><polyline v-for="p in stepEdges" :key="p" :points="p" /></g>
              </g>
              <g fill="none" stroke-width="5.500" stroke-linejoin="round" shape-rendering="crispEdges">
                <polyline v-for="p in redTracks" :key="p" :points="p" stroke="#ff1c1c" />
                <polyline v-for="p in cyanTracks" :key="p" :points="p" stroke="#1cffff" />
              </g>
              <path v-for="g in gaps" :key="g.join()" :d="`M${g[0]} ${g[1] - 5}v10`" stroke="#f8f8f8" stroke-width="1" />
            </svg>
          </section>
          <i class="vsplit v2" />

          <aside class="right">
            <section v-for="(d, i) in rightDocks" :key="d.title" class="dock" :class="{ first: i === 0 }" :style="{ height: d.height + 'px' }">
              <i v-if="i" class="split" />
              <div class="head"><span>{{ d.title }}</span><svg width="11" height="12"><use href="#float" /></svg><svg width="11" height="12"><use href="#close" /></svg></div>
              <span class="combo surface"><svg width="13" height="15"><use href="#cyl" /></svg><b>Surface</b><s /></span>
              <div class="row"><span class="slider"><i /></span><span class="spin"><b>1.00</b><em><s /><s /></em></span></div>
              <div class="listbox" :style="{ height: d.listHeight + 'px' }">
                <ul><li v-for="(t, k) in d.items" :key="t" :class="{ sel: k === d.selected }"><i class="check" /><svg :class="'ic-' + d.icon" :width="d.icon === 'drop' ? 18 : 24" height="24"><use :href="'#' + d.icon" /></svg><span>{{ t }}</span></li></ul>
                <div v-if="d.scroll" class="vbar"><i class="up" /><u /><i class="down" /></div>
              </div>
            </section>
            <section class="dock matrix">
              <i class="split" />
              <div class="head"><span>Matrix</span><svg width="11" height="12"><use href="#float" /></svg><svg width="11" height="12"><use href="#close" /></svg></div>
              <div class="mgrid">
                <svg class="cells" width="184" height="265" viewBox="1721 777 184 265">
                  <g text-anchor="middle" font-size="14"><text v-for="n in 6" :key="n" :x="1738 + n * 25" y="800">{{ n - 1 }}</text><text v-for="n in 8" :key="'r' + n" x="1738" :y="800 + n * 25">{{ n - 1 }}</text></g>
                  <template v-for="m in marks" :key="m.x + '-' + m.y">
                    <rect v-if="m.shape === 'box'" :x="1763.300 + m.x * 25 - m.size" :y="819.400 + m.y * 25 - m.size" :width="m.size * 2" :height="m.size * 2" :fill="m.color" stroke="#111" stroke-width=".8" />
                    <circle v-else :cx="1763.400 + m.x * 25" :cy="819.500 + m.y * 25" :r="m.size" :fill="m.shape === 'ring' ? '#fff' : m.color" :stroke="m.shape === 'ring' ? m.color : 'none'" />
                  </template>
                </svg>
                <div class="vbar mv"><i class="up" /><u /><i class="down" /></div>
                <div class="hbar mh"><i class="al" /><u /><i class="ar" /></div>
                <i class="corner" />
              </div>
            </section>
          </aside>
        </div>
        <div class="tvpop"><svg width="23" height="56" viewBox="0 0 23 56"><path d="M23 .5H3Q.5.500.5 4v33q0 3 2 5L23 55.500z" fill="#fff" stroke="#ddd" /></svg><svg class="tvi" width="22" height="22"><use href="#tv" /></svg></div>
      </main>
    </div>
  </div>
</template>

<style>
html, body { margin: 0; overflow: hidden; }
</style>

<style scoped>
* { box-sizing: border-box; }
.desktop { width: 1920px; height: 1080px; overflow: hidden; display: flex; flex-direction: column; font: 14.5px/20px "Noto Sans", "Open Sans", sans-serif; color: #000; letter-spacing: 0; background: #efebe7; }
.defs { position: absolute; }
svg { display: block; flex: none; }
b { font-weight: 400; }
s { text-decoration: none; }
ul { list-style: none; margin: 0; padding: 0; }
.topbar { height: 28px; flex: none; display: flex; align-items: center; background: linear-gradient(#59564e, #3e3c37); color: #dfdbd2; font-weight: 600; font-size: 14px; position: relative; }
.activities { margin-left: 12px; width: 68px; line-height: 26px; letter-spacing: .35px; }
.ghost { margin-left: 42px; color: #46443e; }
.clock { position: absolute; left: 0; right: 0; text-align: center; padding-left: 68px; line-height: 26px; top: 0; white-space: pre; letter-spacing: .25px; }
.tray { margin-left: auto; display: flex; align-items: center; height: 26px; margin-right: 15px; }
.tray svg:nth-child(2) { margin-left: 28px; }
.tray svg:nth-child(3) { margin-left: 12px; }
.tray svg:nth-child(4) { margin-left: 13px; }
.tray svg:nth-child(5) { margin-left: 9px; }
.work { flex: 1; display: flex; min-height: 0; margin-top: -1px; }
.launcher { width: 67px; flex: none; display: flex; flex-direction: column; position: relative; z-index: 1;
  background: repeating-linear-gradient(90deg, transparent 0 13px, rgba(120, 90, 40, .09) 13px 16px) 0 800px / 67px 260px no-repeat, linear-gradient(#33454f 0, #33454d 690px, #2b3336 790px, #33322e 900px, #292a29 980px, #3a342a 1053px); }
.launch { height: 64px; flex: none; display: flex; align-items: center; position: relative; }
.launch svg { margin-left: -7px; }
.glyph { position: absolute; left: 1px; width: 64px; text-align: center; font-weight: 700; line-height: 40px; top: 3px; }
.glyph.amazon { font-family: "Open Sans", sans-serif; font-size: 35px; color: #1d1d1d; }
.glyph.help { font-family: "Liberation Serif", serif; font-size: 34px; color: #fff; top: 14px; }
.pips { width: 8px; flex: none; padding-left: 2px; display: flex; flex-direction: column; gap: 3px; }
.pips i { width: 5.500px; height: 5.500px; border-radius: 50%; background: #e95420; }
.window { flex: 1; min-width: 0; display: flex; flex-direction: column; position: relative; background: #efebe7; }
.titlebar { height: 28px; flex: none; background: #3c3a36; color: #b5b1a9; font-weight: 600; font-size: 14px; letter-spacing: .25px; display: flex; align-items: center; justify-content: center; position: relative; }
.winbtns { position: absolute; right: 5px; top: 6px; display: flex; gap: 4px; }
.menubar { height: 22px; flex: none; display: flex; gap: 15px; padding: 1px 10px; border-bottom: 1px solid #d5d1cc; }
.menubar u { text-decoration-thickness: 1.500px; text-underline-offset: 2px; }
.toolbar { height: 36px; flex: none; display: flex; align-items: center; padding-top: 2px; background: linear-gradient(#f8f5f2, #ece8e4); border-bottom: 1px solid #b3afab; }
.toolbar > * { flex: none; }
.grip { width: 4px; height: 17px; background: radial-gradient(circle, #aaa6a2 .8px, transparent 1px) 0 0 / 3px 3px; }
.g1 { margin-left: 5px; } .g2 { margin-left: 13px; } .g3 { margin-left: 14px; } .g4 { margin-left: 9px; }
.t-home { margin-left: 8px; } .t-open { margin-left: 8px; }
.bar { width: 1px; height: 20px; background: #d4d0cc; margin-left: 7px; }
.t-save { margin-left: 7px; } .t-saveall { margin-left: 12px; } .t-wire { margin-left: 9px; } .t-cyl { margin-left: 14px; } .t-cyl2 { margin-left: 13px; }
.pressed { width: 30px; height: 29px; margin-left: 8px; border: 1px solid #a5a19d; border-radius: 2px; background: #dad6d2; display: flex; align-items: center; justify-content: center; }
.op { width: 56px; margin-left: 9px; white-space: nowrap; letter-spacing: -.05px; }
.o1 { margin-left: 8px; }
.slider { display: flex; align-items: center; justify-content: flex-end; height: 14px; }
.slider::before { content: ""; flex: 1; height: 5px; border: 1px solid #1d6fa5; border-radius: 3px; background: #3ea2e4; }
.slider i { width: 14px; height: 13px; border: 1px solid #aaa6a2; border-radius: 3px; background: #fff; margin-left: -1px; }
.slider.low { justify-content: flex-start; }
.slider.low::before { order: 2; border-color: #b5b1ad; background: #cfcbc7; margin-left: -1px; }
.s1 { width: 82px; margin-left: 10px; padding-left: 1px; } .s2 { width: 159px; margin-left: 9px; } .s3 { width: 158px; margin-left: 10px; }
.low i { box-shadow: -1px 0 0 #2677ac; }
.spin { height: 25px; width: 61px; border: 1px solid #aca8a4; border-radius: 3px; background: #fff; display: flex; }
.spin b { flex: 1; padding-left: 4px; line-height: 23px; }
.spin em { width: 14px; flex: none; border-left: 1px solid #b9b5b1; background: #f6f4f2; display: flex; flex-direction: column; align-items: center; justify-content: center; gap: 5px; }
.spin em s { border: 4px solid transparent; border-top: 0; border-bottom: 5px solid #b0adaa; }
.spin em s:last-child { border-bottom: 0; border-top: 5px solid #555; }
.spin em.on s:first-child { border-bottom-color: #555; }
.p1 { margin-left: 2px; } .p2 { margin-left: 2px; } .p3 { margin-left: 2px; }
.t-rib { margin-left: 12px; color: #505050; } .t-cube { margin-left: 14px; } .t-b { margin-left: 9px; } .o2 { margin-left: 13px; } .t-s { margin-left: 5px; } .o3 { margin-left: 13px; }
.combo { height: 25px; border: 1px solid #aca8a4; border-radius: 3px; background: linear-gradient(#fff, #ebe8e5); display: flex; align-items: center; }
.combo b { flex: 1; }
.combo s { border: 4px solid transparent; border-top: 5px solid #4c4c4c; border-bottom: 0; margin-right: 6px; }
.c1 { width: 104px; margin-left: 1px; } .c1 svg { margin: 0 6px 0 8px; }
.c2 { width: 177px; margin-left: 1px; } .c2 svg { margin: 0 4px 0 5px; }
.t-sh { margin-left: 5px; } .t-cards { margin-left: 10px; }
.progress { width: 161px; height: 25px; margin-left: 5px; border: 1px solid #aca8a4; border-radius: 3px; background: #fff; text-align: center; line-height: 23px; }
.c3 { width: 91px; margin-left: 1px; } .c3 svg { margin: 0 2px 0 5px; }
.content { flex: 1; display: flex; min-height: 0; padding-top: 1px; }
.left { width: 200px; flex: none; display: flex; flex-direction: column; padding-left: 5px; overflow: hidden; }
.dock { flex: none; display: flex; flex-direction: column; overflow: hidden; }
.split { width: 17px; height: 3px; flex: none; margin: 0 auto 4px 88px; background: radial-gradient(circle, #aeaaa6 .8px, transparent 1px) 0 0 / 3px 3px repeat-x; }
.head { height: 17px; flex: none; display: flex; align-items: center; padding-right: 2px; gap: 3px; margin: 0 0 1px -1px; }
.head span { flex: 1; white-space: nowrap; line-height: 17px; }
.models { height: 184px; padding-top: 1px; }
.list { margin-top: 1px; height: 143px; border: 1px solid #b5b1ac; border-right: 0; background: #fff; }
.list li { height: 26px; display: flex; align-items: center; gap: 8px; padding-left: 4px; letter-spacing: .22px; }
.sel { background: #308cc6; color: #fff; }
.sel svg { opacity: .8; }
.surface { width: 184px; flex: none; }
.surface svg { margin: 0 5px 0 6px; }
.row { height: 25px; flex: none; margin-top: 8px; display: flex; padding-left: 56px; }
.row .slider { width: 69px; margin-top: 2px; }
.row .spin { width: 75px; flex: none; margin-right: -5px; }
.row .spin em { width: 18px; padding-right: 5px; }
.hbar { height: 19px; margin-top: 12px; border: 1px solid #b5b1ac; border-right: 0; display: flex; padding-top: 3px; background: #fff; }
.hbar > * { border-top: 1px solid #b5b1ac; height: 15px; }
.hbar u { width: 150px; background: #f6f4f2; border-left: 1px solid #b5b1ac; border-right: 1px solid #b5b1ac; }
.al, .ar { width: 13px; display: flex; align-items: center; justify-content: center; background: #f6f4f2; }
.ar { margin-left: 7px; width: 15px; }
.hbar small { flex: 1; background: #efebe7; border-left: 1px solid #b5b1ac; }
.al::after, .ar::after { content: ""; border: 4px solid transparent; border-right: 5px solid #4c4c4c; border-left: 0; }
.ar::after { border-left: 5px solid #4c4c4c; border-right: 0; }
.listbox { margin-top: 12px; flex: none; display: flex; border: 1px solid #b5b1ac; border-right: 0; background: #fff; overflow: hidden; }
.listbox ul { flex: 1; overflow: hidden; }
.listbox li { height: 26px; display: flex; align-items: center; padding-left: 3px; letter-spacing: .1px; }
.listbox li span { padding-top: 1px; }
.check { width: 14px; height: 14px; flex: none; border: 1px solid #b9b5b1; background: #fff; }
.sel .check svg { opacity: 1; }
.ic-note { margin: 0 7px 0 7px; }
.ic-drop { margin: 0 5px 0 6px; }
.ic-sheet { margin: 0 6px; }
.vbar { width: 10px; flex: none; border-left: 1px solid #b5b1ac; background: #e1dedb; display: flex; flex-direction: column; overflow: hidden; }
.vbar i { height: 14px; flex: none; width: 14px; background: #f6f4f2; display: flex; align-items: center; justify-content: center; }
.vbar .up { border-bottom: 1px solid #b5b1ac; }
.vbar .down { border-top: 1px solid #b5b1ac; margin-top: auto; }
.vbar .up::after { content: ""; border: 4px solid transparent; border-bottom: 4px solid #4c4c4c; border-top: 0; }
.vbar .down::after { content: ""; border: 4px solid transparent; border-top: 4px solid #4c4c4c; border-bottom: 0; }
.vbar u { height: 27px; flex: none; background: #f8f6f5; border-bottom: 1px solid #b5b1ac; }
.vbar.long u { height: 121px; }
.sheet { height: 25px; }
.treebox { height: 250px; margin-top: 5px; border: 1px solid #b5b1ac; border-right: 0; background: #fff; display: flex; overflow: hidden; }
.tree { flex: 1; overflow: hidden; }
.th { height: 21px; padding-left: 2px; border-bottom: 1px solid #aca8a4; background: linear-gradient(#faf8f6, #edeae6); line-height: 21px; white-space: nowrap; }
.tr { height: 19px; display: flex; align-items: center; white-space: nowrap; line-height: 19px; letter-spacing: .1px; }
.arrow { width: 24px; padding-left: 7px; flex: none; }
.arrow::before { content: ""; display: block; width: 0; border: 5px solid transparent; border-left: 5px solid #3f3f3f; border-right: 0; }
.open .arrow::before { border: 5px solid transparent; border-top: 5px solid #3f3f3f; border-bottom: 0; margin-left: -2px; }
.ic-box { margin: 0 7px 0 1px; }
.leaf { padding-left: 43px; }
.tr .ic-sheet { margin: 0 5px 0 6px; }
.vsplit { width: 4px; flex: none; height: 17px; background: radial-gradient(circle, #aeaaa6 .8px, transparent 1px) 0 0 / 3px 3px repeat-y; }
.v1 { margin: 464px 10px 0 2px; }
.view { width: 1431px; height: 944px; background: #fff; flex: none; }
.v2 { margin: 464px 3px 0 3px; }
.right { width: 196px; flex: none; display: flex; flex-direction: column; }
.right .dock { padding-left: 1px; overflow: visible; }
.right .dock.first { padding-top: 1px; }
.right .split { margin-left: 88px; }
.matrix .mgrid { margin-left: -5px; width: 200px; height: 283px; border: 1px solid #b5b1ac; display: grid; grid-template: 265px 16px / 184px 14px; background: #fff; }
.cells { overflow: hidden; }
.mv { width: 14px; }
.mv u { height: 128px; }
.mh { margin: 0; border: 0; padding: 0; border-top: 1px solid #b5b1ac; background: #e1dedb; height: 16px; }
.mh > * { border-top: 0; }
.mh u { width: 59px; }
.mh .ar { margin-left: auto; border-left: 1px solid #b5b1ac; }
.corner { border: 1px solid #b5b1ac; border-width: 1px 0 0 1px; background: #efebe7; }
.tvpop { position: absolute; right: 0; top: 124px; width: 24px; height: 56px; }
.tvi { position: absolute; left: 1px; top: 1px; }
</style>
